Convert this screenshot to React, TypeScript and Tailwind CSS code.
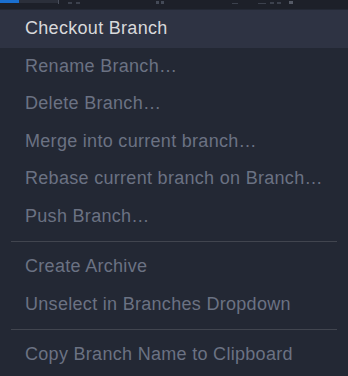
import React from 'react';

type Entry = { label: string; active?: boolean } | 'sep';

const entries: Entry[] = [
    { label: 'Checkout Branch', active: true },
    { label: 'Rename Branch…' },
    { label: 'Delete Branch…' },
    { label: 'Merge into current branch…' },
    { label: 'Rebase current branch on Branch…' },
    { label: 'Push Branch…' },
    'sep',
    { label: 'Create Archive' },
    { label: 'Unselect in Branches Dropdown' },
    'sep',
    { label: 'Copy Branch Name to Clipboard' },
];

const App: React.FC = () => {
    return (
        <div className="w-[348px] h-[376px] overflow-hidden bg-[#232834]" style={{ fontFamily: '"Liberation Sans", Arial, sans-serif' }}>
            {/* app content peeking above the menu */}
            <div className="h-[9px] bg-[#1d2029] flex items-start">
                <div className="w-[19px] h-[3px] bg-[#1a6fd0]" />
                <div className="w-[39px] h-[3px] bg-[#2b2f3a]" />
                <div className="w-[1px] h-[4px] bg-[#4a4f5c]" />
                <div className="ml-[9px] mt-[2px] w-[4px] h-[2px] bg-[#3c414d]" />
                <div className="ml-[4px] mt-[2px] w-[4px] h-[2px] bg-[#3c414d]" />
                <div className="ml-[76px] mt-[1px] w-[3px] h-[3px] bg-[#444a57]" />
                <div className="ml-[2px] mt-[1px] w-[3px] h-[3px] bg-[#444a57]" />
                <div className="ml-[68px] mt-[3px] w-[6px] h-[1px] bg-[#3c414d]" />
                <div className="ml-[20px] mt-[3px] w-[8px] h-[1px] bg-[#3c414d]" />
                <div className="ml-[4px] mt-[2px] w-[4px] h-[2px] bg-[#3c414d]" />
                <div className="ml-[3px] mt-[2px] w-[4px] h-[2px] bg-[#3c414d]" />
                <div className="ml-[8px] mt-[1px] w-[4px] h-[3px] bg-[#555a66]" />
            </div>
            <div className="pt-[1px] flex flex-col">
                {entries.map((e, i) =>
                    e === 'sep' ? (
                        <div key={i} className="h-[13px] flex items-center px-[11px]">
                            <div className="w-full h-[1px] bg-[#41454f]" />
                        </div>
                    ) : (
                        <div
                            key={i}
                            className={`h-[37.5px] flex items-center pl-[25px] text-[18px] tracking-[0.3px] whitespace-nowrap ${e.active ? 'bg-[#2e3343] text-[#d9d9db]' : 'text-[#6b7283]'}`}
                        >
                            {e.label}
                        </div>
                    )
                )}
            </div>
        </div>
    );
};

export default App;
